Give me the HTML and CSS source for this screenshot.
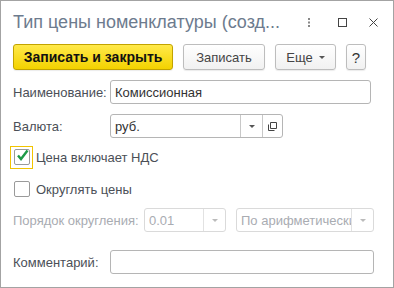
FILE: index.html
```html
<!DOCTYPE html>
<html lang="ru">
<head>
  <meta charset="UTF-8" />
  <title>Тип цены номенклатуры</title>
  <link rel="stylesheet" href="styles.css">
</head>
<body>
  <div class="window">
    <!-- Заголовок окна -->
    <div class="header">
      <div class="title">Тип цены номенклатуры (созд...</div>
      <div class="win-icons">
        <svg width="4" height="11" viewBox="0 0 4 11" class="dots">
          <rect x="1" y="1" width="2" height="2" />
          <rect x="1" y="4.5" width="2" height="2" />
          <rect x="1" y="8" width="2" height="2" />
        </svg>
        <svg width="11" height="11" viewBox="0 0 11 11" class="win-btn">
          <rect x="1.5" y="1.5" width="8" height="8" fill="none" stroke="#444" />
        </svg>
        <svg width="11" height="11" viewBox="0 0 11 11" class="win-btn">
          <path d="M1.5 1.5 L9.5 9.5 M9.5 1.5 L1.5 9.5" stroke="#444" stroke-width="1" />
        </svg>
      </div>
    </div>

    <!-- Командная панель -->
    <div class="toolbar">
      <button class="btn btn-main">Записать и закрыть</button>
      <button class="btn btn-save">Записать</button>
      <button class="btn btn-more">Еще <span class="arrow"></span></button>
      <button class="btn btn-help">?</button>
    </div>

    <div class="form">
      <div class="row row-name">
        <label class="lbl">Наименование:</label>
        <div class="field field-name">Комиссионная</div>
      </div>

      <div class="row row-currency">
        <label class="lbl">Валюта:</label>
        <div class="field combo combo-currency">
          <span class="combo-text">руб.</span>
          <span class="combo-btn"><span class="arrow"></span></span>
          <span class="combo-btn open-btn">
            <svg width="11" height="11" viewBox="0 0 11 11">
              <path d="M3.5 1.5 H9.5 V7.5 H3.5 Z" fill="none" stroke="#444" />
              <path d="M1.5 3.5 V9.5 H7.5" fill="none" stroke="#444" />
            </svg>
          </span>
        </div>
      </div>

      <div class="row row-check">
        <span class="focus-box">
          <span class="check checked">
            <svg width="15" height="15" viewBox="0 0 15 15">
              <path d="M3 7.5 L6 11 L12.5 2.5" fill="none" stroke="#1e9a48" stroke-width="2.4" />
            </svg>
          </span>
        </span>
        <span class="check-label">Цена включает НДС</span>
      </div>

      <div class="row row-check2">
        <span class="check-wrap"><span class="check"></span></span>
        <span class="check-label">Округлять цены</span>
      </div>

      <div class="row row-round disabled">
        <label class="lbl lbl-round">Порядок округления:</label>
        <div class="field combo combo-order">
          <span class="combo-text">0.01</span>
          <span class="combo-btn"><span class="arrow"></span></span>
        </div>
        <div class="field combo combo-method">
          <span class="combo-text">По арифметически</span>
          <span class="combo-btn"><span class="arrow"></span></span>
        </div>
      </div>

      <div class="row row-comment">
        <label class="lbl">Комментарий:</label>
        <div class="field field-comment"></div>
      </div>
    </div>
  </div>
</body>
</html>
```

FILE: styles.css
```css
* {
  box-sizing: border-box;
}

body {
  margin: 0;
  background: #fff;
  font-family: Arial, "Liberation Sans", sans-serif;
}

.window {
  width: 394px;
  height: 288px;
  border: 1px solid #a3a3a3;
  background: #fff;
}

.header {
  height: 43px;
  display: flex;
  align-items: center;
  padding: 0 0 0 12px;
}

.title {
  flex: 1;
  font-size: 18px;
  color: #6d7b8e;
  white-space: nowrap;
  padding-bottom: 1px;
}

.win-icons {
  display: flex;
  align-items: center;
  height: 11px;
  padding-right: 14px;
}

.dots {
  fill: #888;
  margin-right: 26px;
}

.win-btn + .win-btn {
  margin-left: 20px;
}

.toolbar {
  display: flex;
  padding-left: 12px;
  height: 26px;
}

.btn {
  height: 26px;
  border-radius: 3px;
  font-family: Arial, "Liberation Sans", sans-serif;
  font-size: 13px;
  color: #444;
  background: linear-gradient(#ffffff, #f1f1f1);
  border: 1px solid #bdbdbd;
  box-shadow: 0 1px 1px rgba(0, 0, 0, 0.08);
  padding: 0;
  margin-right: 10px;
}

.btn-main {
  width: 160px;
  font-weight: bold;
  font-size: 14px;
  color: #111;
  background: linear-gradient(#ffe94a, #f3d200);
  border-color: #c2a300;
}

.btn-save {
  width: 82px;
}

.btn-more {
  width: 61px;
  display: flex;
  align-items: center;
  justify-content: center;
  gap: 6px;
}

.btn-help {
  width: 20px;
  font-size: 15px;
  color: #333;
}

.arrow {
  display: inline-block;
  width: 0;
  height: 0;
  border-left: 3px solid transparent;
  border-right: 3px solid transparent;
  border-top: 3px solid #555;
}

.form {
  padding: 10px 0 0 12px;
}

.row {
  display: flex;
  align-items: center;
}

.lbl {
  width: 97px;
  font-size: 13px;
  color: #4b4f57;
  flex-shrink: 0;
}

.field {
  height: 24px;
  border: 1px solid #b5b5b5;
  border-radius: 3px;
  font-size: 13px;
  color: #333;
  background: #fff;
  display: flex;
  align-items: center;
  padding-left: 4px;
}

.field-name {
  width: 261px;
}

.row-currency {
  margin-top: 10px;
}

.combo {
  padding-left: 0;
}

.combo-text {
  flex: 1;
  padding-left: 4px;
  white-space: nowrap;
  overflow: hidden;
}

.combo-currency {
  width: 173px;
}

.combo-btn {
  width: 22px;
  height: 100%;
  border-left: 1px solid #c8c8c8;
  display: flex;
  align-items: center;
  justify-content: center;
}

.open-btn {
  width: 20px;
}

.row-check {
  margin-top: 8px;
  height: 22px;
}

.focus-box {
  width: 23px;
  height: 23px;
  margin-left: -3px;
  border: 1px solid #f2c400;
  display: flex;
  align-items: center;
  justify-content: center;
}

.check {
  display: block;
  width: 16px;
  height: 16px;
  border: 1px solid #9a9a9a;
  border-radius: 2px;
  background: #fff;
  position: relative;
}

.check svg {
  position: absolute;
  left: 0;
  top: -2px;
}

.check-label {
  font-size: 13px;
  color: #4b4f57;
  margin-left: 3px;
}

.row-check2 {
  margin-top: 10px;
  height: 22px;
}

.check-wrap {
  width: 23px;
  height: 23px;
  margin-left: -3px;
  display: flex;
  align-items: center;
  justify-content: center;
}

.row-round {
  margin-top: 8px;
}

.disabled .lbl,
.disabled .field {
  color: #a9acb2;
}

.disabled .field {
  border-color: #dadada;
}

.disabled .combo-btn {
  border-left-color: #e2e2e2;
}

.disabled .arrow {
  border-top-color: #bbb;
}

.lbl-round {
  width: 131px;
}

.combo-order {
  width: 82px;
}

.combo-method {
  width: 138px;
  margin-left: 10px;
}

.row-comment {
  margin-top: 18px;
}

.field-comment {
  width: 264px;
}
```
